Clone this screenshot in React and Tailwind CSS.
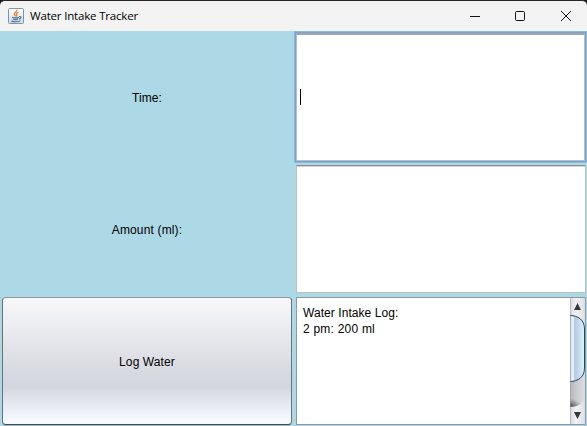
function JavaIcon() {
  return (
    <svg width="16" height="16" viewBox="0 0 16 16" className="shrink-0">
      <defs>
        <linearGradient id="tile" x1="0" y1="0" x2="0" y2="1">
          <stop offset="0" stopColor="#ffffff" />
          <stop offset="1" stopColor="#d5dce3" />
        </linearGradient>
      </defs>
      <rect x="0.5" y="0.5" width="15" height="15" rx="1" fill="url(#tile)" stroke="#7c94ab" />
      <path d="M8.800 1.800C9.500 4 5.800 4.600 6.300 6.300C6.600 7.200 7.600 7.600 7.700 8.500M10.300 4.300C8.200 5 7.900 6 8.700 6.800C9.200 7.400 8.900 8 8.400 8.500" fill="none" stroke="#ee8128" strokeWidth="1.3" />
      <path d="M4 9.200C6 9.900 9.500 9.800 10.800 9.200M5 11C6.500 11.700 9 11.600 10.300 11.100M11 8.700C13.900 8 13.500 10.500 11 11.100M3.500 12.600C3 13.900 10.800 14.200 12.500 12.700" fill="none" stroke="#456f96" strokeWidth="1.1" />
    </svg>
  );
}

function TitleBar() {
  return (
    <header className="flex h-[31px] items-center rounded-t-[5px] border-t border-[#29262b] bg-[#f3f3f3] pl-2">
      <JavaIcon />
      <span className="ml-1.5 w-[110px] whitespace-nowrap font-['Open_Sans','Noto_Sans',sans-serif] text-[11.5px] leading-4 tracking-[-0.18px] text-black">
        Water Intake Tracker
      </span>
      <svg width="105" height="12" viewBox="0 0 105 12" className="mr-[14px] mb-px ml-auto" fill="none" stroke="#111">
        <path d="M2 6.500h10" />
        <rect x="47.500" y="1.500" width="9" height="9" rx="1" />
        <path d="M93 1l10 10M103 1L93 11" />
      </svg>
    </header>
  );
}

function ScrollBar() {
  return (
    <svg width="15" height="126" viewBox="0 0 15 126" className="shrink-0">
      <defs>
        <linearGradient id="track">
          <stop offset="0" stopColor="#b2b4b8" />
          <stop offset="0.4" stopColor="#c8cacd" />
          <stop offset="1" stopColor="#dcdee2" />
        </linearGradient>
        <linearGradient id="button">
          <stop offset="0" stopColor="#d8dade" />
          <stop offset="0.4" stopColor="#f2f3f5" />
          <stop offset="1" stopColor="#dddfe4" />
        </linearGradient>
        <linearGradient id="thumb">
          <stop offset="0" stopColor="#a9bfd8" />
          <stop offset="0.12" stopColor="#e8f0f8" />
          <stop offset="0.24" stopColor="#e4eef8" />
          <stop offset="0.32" stopColor="#b3c9df" />
          <stop offset="0.6" stopColor="#c3dbee" />
          <stop offset="1" stopColor="#e0f3fc" />
        </linearGradient>
        <radialGradient id="shade" gradientUnits="userSpaceOnUse" cx="0" cy="109" r="12" gradientTransform="translate(0 32.700) scale(1 0.700)">
          <stop offset="0" stopColor="#303235" stopOpacity="0.9" />
          <stop offset="1" stopColor="#55575a" stopOpacity="0" />
        </radialGradient>
      </defs>
      <rect width="15" height="126" fill="url(#track)" />
      <rect y="96" width="15" height="13" fill="url(#shade)" />
      <path d="M0 0H15V28C15 22 8 17.500 0 17.500Z" fill="url(#button)" />
      <path d="M0 126H15V100C13 106 7 109 0 109Z" fill="url(#button)" />
      <path d="M0 17.500C8 17.500 14.500 22 14.500 31V70C14.500 79 8 83.500 0 83.500Z" fill="url(#thumb)" />
      <path d="M0 17.500C8 17.500 14.500 22 14.500 31V70C14.500 79 8 83.500 0 83.500" fill="none" stroke="#29475f" />
      <path d="M0.500 0V126" stroke="#9298a1" strokeOpacity="0.5" />
      <path d="M4 12L7.500 5L11 12ZM4 114L7.500 121L11 114Z" fill="#35383c" />
    </svg>
  );
}

export default function App() {
  return (
    <div className="h-[426px] w-[587px] overflow-hidden bg-[#add8e6] font-['Liberation_Sans',Arial,sans-serif] text-xs text-black">
      <div className="bg-[#171519]">
        <TitleBar />
      </div>
      <main className="grid grid-cols-[294px_293px] grid-rows-[132px_132px_131px]">
        <label className="flex items-center justify-center pt-0.5 tracking-[0.1px]">Time:</label>
        <div className="border border-[#8abbdc]">
          <div className="flex h-[130px] items-center border border-[#73a4d9] bg-white">
            <div className="flex h-full w-full items-center border border-t-2 border-[#bdbdbd] border-t-[#a4a4a6] pb-0.5 pl-[3px]">
              <span className="h-4 w-px bg-black" />
            </div>
          </div>
        </div>
        <label className="flex items-center justify-center pt-0.5 tracking-[0.15px]">Amount (ml):</label>
        <div className="pt-0.5 pr-px pb-0.5 pl-0.5">
          <div className="h-full border border-[#bebfc0] border-t-[#8d8e8f] bg-white shadow-[inset_0_1px_0_#d4d4d4]" />
        </div>
        <div className="pt-0.5 pr-0.5 pb-px pl-0.5">
          <button className="flex h-[128px] w-[290px] items-center justify-center rounded border border-[#6c7077] border-t-[#92979e] border-b-[#45484d] bg-[linear-gradient(180deg,#f8f8fa_0%,#d6d9df_60%,#d3d6df_70%,#f7faff_98%)] pt-0.5 tracking-[0.1px] shadow-[0_1px_0_#9cbfcb]">
            Log Water
          </button>
        </div>
        <div className="pt-0.5 pr-px pl-0.5">
          <div className="flex h-[128px] border border-[#9297a1] bg-white">
            <div className="flex-1 pt-[7px] pl-1.5 leading-4">
              <p className="tracking-[0.06px]">Water Intake Log:</p>
              <p className="tracking-[0.22px]">2 pm: 200 ml</p>
            </div>
            <ScrollBar />
          </div>
        </div>
      </main>
    </div>
  );
}
